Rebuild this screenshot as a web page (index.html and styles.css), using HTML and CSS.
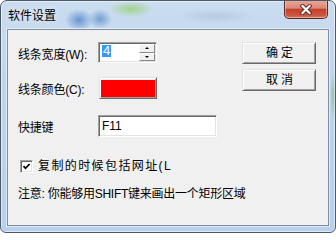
FILE: index.html
```html
<!DOCTYPE html>
<html lang="zh">
<head>
<meta charset="utf-8">
<title>软件设置</title>
<link rel="stylesheet" href="styles.css">
</head>
<body>
<div class="window">
  <div class="titlebar">
    <span class="title">软件设置</span>
    <div class="close">
      <svg width="14" height="11" viewBox="0 0 14 11">
        <path d="M3.5 2 L10.5 9 M10.5 2 L3.5 9" stroke="#5a2a24" stroke-width="4" stroke-linecap="square" fill="none"/>
        <path d="M3.5 2 L10.5 9 M10.5 2 L3.5 9" stroke="#ffffff" stroke-width="2.2" stroke-linecap="square" fill="none"/>
      </svg>
    </div>
  </div>
  <div class="client">
    <div class="top">
      <div class="form">
        <div class="row r1">
          <span class="lbl">线条宽度(W):</span>
          <div class="spin">
            <div class="val"><span class="sel">4</span></div>
            <div class="arrows">
              <div class="arr"><span class="tri-up"></span></div>
              <div class="arr"><span class="tri-down"></span></div>
            </div>
          </div>
        </div>
        <div class="row r2">
          <span class="lbl">线条颜色(C):</span>
          <div class="colorbtn"><div class="swatch"></div></div>
        </div>
        <div class="row r3">
          <span class="lbl">快捷键</span>
          <div class="textbox">F11</div>
        </div>
      </div>
      <div class="buttons">
        <div class="btn">确定</div>
        <div class="btn">取消</div>
      </div>
    </div>
    <div class="check">
      <div class="cb">
        <svg width="9" height="9" viewBox="0 0 9 9"><polyline points="1.5,4.2 3.5,6.3 7.6,2" stroke="#000" stroke-width="1.8" fill="none"/></svg>
      </div>
      <span class="cblbl">复制的时候包括网址(L</span>
    </div>
    <div class="note">注意: 你能够用SHIFT键来画出一个矩形区域</div>
  </div>
</div>
</body>
</html>
```

FILE: styles.css
```css
* { box-sizing: border-box; }
html, body { margin: 0; padding: 0; }
body {
  width: 336px;
  height: 233px;
  overflow: hidden;
  background: #ffffff;
  font-family: "Liberation Sans", "Noto Sans CJK SC", sans-serif;
  font-size: 12px;
  color: #000;
}

.window {
  width: 336px;
  height: 233px;
  border: 1px solid #4b5866;
  border-radius: 7px 7px 6px 6px;
  overflow: hidden;
  display: flex;
  flex-direction: column;
  box-shadow: inset 0 0 0 1px rgba(255, 255, 255, 0.55);
  background:
    radial-gradient(ellipse 14px 11px at 78px 19px, rgba(60, 120, 195, 0.7), transparent),
    radial-gradient(ellipse 12px 10px at 99px 18px, rgba(60, 120, 195, 0.6), transparent),
    radial-gradient(ellipse 22px 8px at 130px 8px, rgba(150, 210, 115, 0.8), transparent),
    radial-gradient(ellipse 40px 7px at 215px 15px, rgba(140, 165, 195, 0.3), transparent),
    radial-gradient(ellipse 4px 25px at 333px 95px, rgba(120, 175, 110, 0.6), transparent),
    linear-gradient(#cadcef, #bed4eb 40%, #b9d0ea);
}

.titlebar {
  height: 28px;
  flex: none;
  display: flex;
  align-items: center;
  padding-left: 7px;
}
.title {
  line-height: 14px;
  padding-top: 1px;
  text-shadow: 0 0 6px rgba(255, 255, 255, 0.9);
}
.close {
  margin-left: auto;
  margin-right: 7px;
  align-self: flex-start;
  margin-top: -1px;
  width: 44px;
  height: 19px;
  border: 1px solid #5b2b25;
  border-top: none;
  border-radius: 0 0 5px 5px;
  background: linear-gradient(#e9a899 0%, #dc8878 45%, #c5402c 52%, #cc5540 85%, #d9806a 100%);
  box-shadow: inset 0 0 0 1px rgba(255, 220, 210, 0.45);
  display: flex;
  align-items: center;
  justify-content: center;
}

.client {
  flex: none;
  height: 197px;
  margin: 0 6px;
  border: 1px solid #7d8da2;
  box-shadow: 0 0 0 1px rgba(255, 255, 255, 0.55);
  background: #f0f0f0;
  padding: 12px 0 0 10px;
}

.top { display: flex; }
.form {
  width: 224px;
  display: flex;
  flex-direction: column;
}
.row { display: flex; align-items: center; }
.r1 { height: 21px; margin-bottom: 14px; }
.r2 { height: 22px; margin-bottom: 16px; }
.r3 { height: 22px; }
.lbl {
  width: 80px;
  line-height: 14px;
  padding-top: 4px;
  white-space: nowrap;
  letter-spacing: -0.2px;
}

.spin, .textbox, .cb {
  background: #fff;
  border: 1px solid;
  border-color: #a0a0a0 #ffffff #ffffff #a0a0a0;
  box-shadow: inset 1px 1px 0 #696969, inset -1px -1px 0 #e3e3e3;
}
.spin {
  width: 59px;
  height: 21px;
  display: flex;
  padding: 1px 1px 1px 2px;
}
.val { flex: 1; padding-left: 1px; }
.sel {
  display: inline-block;
  background: #3399ff;
  color: #fff;
  font-size: 13px;
  line-height: 12px;
  height: 12px;
  padding: 0 1px;
}
.arrows {
  width: 16px;
  display: flex;
  flex-direction: column;
}
.arr {
  flex: 1;
  background: #f0f0f0;
  border: 1px solid;
  border-color: #ffffff #888888 #888888 #ffffff;
  display: flex;
  align-items: center;
  justify-content: center;
}
.tri-up {
  width: 0; height: 0;
  border-left: 2px solid transparent;
  border-right: 2px solid transparent;
  border-bottom: 2px solid #000;
}
.tri-down {
  width: 0; height: 0;
  border-left: 2px solid transparent;
  border-right: 2px solid transparent;
  border-top: 2px solid #000;
}

.colorbtn {
  width: 58px;
  height: 22px;
  margin-left: 1px;
  background: #f0f0f0;
  border: 1px solid;
  border-color: #e3e3e3 #696969 #696969 #e3e3e3;
  box-shadow: inset 1px 1px 0 #ffffff, inset -1px -1px 0 #a0a0a0;
  padding: 2px 1px 1px 1px;
}
.swatch { height: 100%; background: #ff0000; }

.textbox {
  width: 119px;
  height: 22px;
  padding: 0 3px;
  line-height: 20px;
}

.buttons {
  display: flex;
  flex-direction: column;
  gap: 5px;
}
.btn {
  width: 74px;
  height: 22px;
  background: #f0f0f0;
  border: 1px solid;
  border-color: #e3e3e3 #696969 #696969 #e3e3e3;
  box-shadow: inset 1px 1px 0 #ffffff, inset -1px -1px 0 #a0a0a0;
  display: flex;
  align-items: center;
  justify-content: center;
  letter-spacing: 3px;
  padding-left: 4px;
  line-height: 14px;
}

.check {
  display: flex;
  align-items: center;
  height: 13px;
  margin-top: 23px;
  margin-left: 2px;
}
.cb {
  width: 13px;
  height: 13px;
  flex: none;
  display: flex;
  align-items: center;
  justify-content: center;
}
.cb svg { display: block; }
.cblbl {
  margin-left: 5px;
  white-space: nowrap;
  letter-spacing: 1.4px;
  line-height: 13px;
}

.note {
  margin-top: 14px;
  line-height: 14px;
  white-space: nowrap;
  letter-spacing: -0.25px;
}
```
